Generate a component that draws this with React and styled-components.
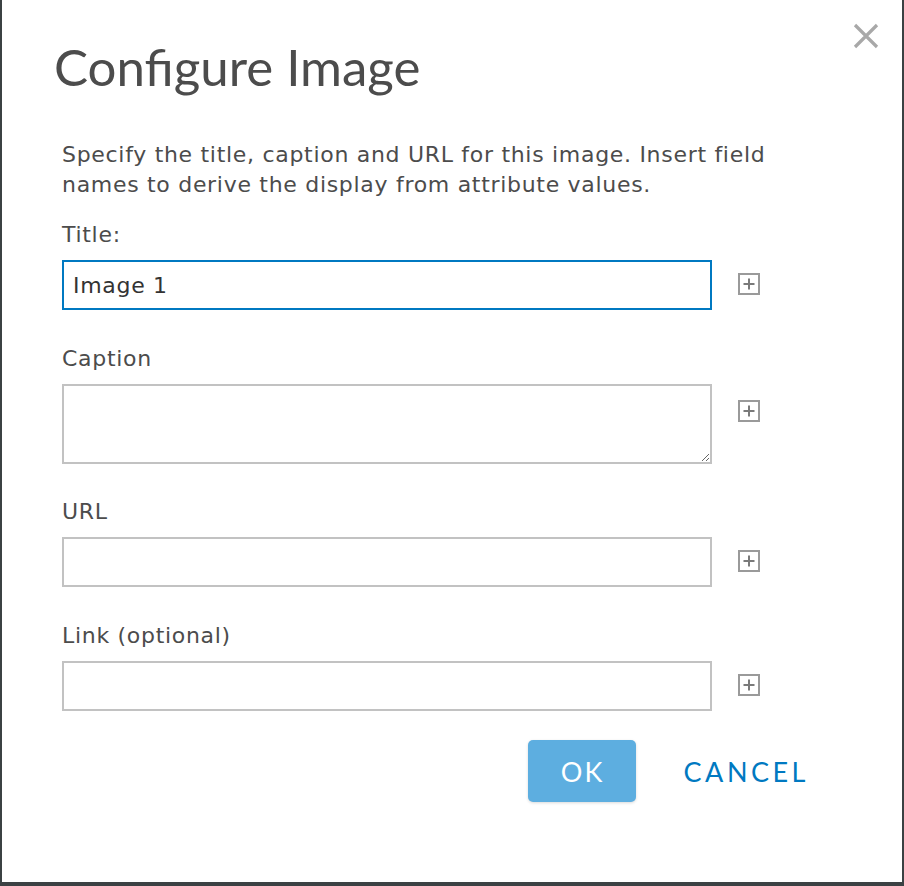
import React from 'react'
import styled, { createGlobalStyle } from 'styled-components'

const GlobalStyle = createGlobalStyle`
  html, body {
    margin: 0;
    padding: 0;
    background: #3b4143;
  }
  body {
    width: 904px;
    height: 886px;
    overflow: hidden;
  }
`

const Dialog = styled.div`
  position: relative;
  box-sizing: border-box;
  margin: 0 2px;
  height: 882px;
  background: #fff;
  padding: 0 93px 0 60px;
`

const Close = styled.button`
  position: absolute;
  top: 22px;
  right: 22px;
  width: 28px;
  height: 28px;
  padding: 0;
  border: 0;
  background: none;
  cursor: pointer;
`

const Title = styled.h1`
  margin: 0 0 0 -8px;
  padding-top: 38px;
  font-family: 'Lato', 'Open Sans', sans-serif;
  font-weight: 400;
  font-size: 51px;
  line-height: 58px;
  color: #4c4c4c;
`

const Intro = styled.p`
  margin: 44px 0 0;
  font-family: 'DejaVu Sans', Verdana, sans-serif;
  font-size: 22px;
  letter-spacing: 0.7px;
  line-height: 30px;
  color: #4c4c4c;
`

const Field = styled.div`
  margin-top: ${props => props.top || 34}px;
`

const Label = styled.label`
  display: block;
  font-family: 'DejaVu Sans', Verdana, sans-serif;
  font-size: 22px;
  letter-spacing: 0.7px;
  line-height: 30px;
  color: #4c4c4c;
  margin-bottom: ${props => props.gap || 10}px;
`

const Row = styled.div`
  display: flex;
  align-items: flex-start;
  gap: 26px;
`

const TextInput = styled.input`
  box-sizing: border-box;
  width: 650px;
  height: 50px;
  margin: 0;
  padding: 0 9px;
  border: 2px solid ${props => (props.focused ? '#0079c1' : '#c2c2c2')};
  border-radius: 0;
  outline: none;
  font-family: 'DejaVu Sans', Verdana, sans-serif;
  font-size: 22px;
  letter-spacing: 0.7px;
  color: #333;
  background: #fff;
`

const TextArea = styled.textarea`
  box-sizing: border-box;
  width: 650px;
  height: 80px;
  margin: 0;
  padding: 8px 9px;
  border: 2px solid #c2c2c2;
  border-radius: 0;
  outline: none;
  font-family: 'DejaVu Sans', Verdana, sans-serif;
  font-size: 22px;
  color: #333;
  resize: vertical;
  display: block;
`

const AddButton = styled.button`
  flex: none;
  width: 22px;
  height: 22px;
  margin-top: ${props => props.offset || 13}px;
  padding: 0;
  border: 0;
  background: none;
  cursor: pointer;
  display: block;
`

const Actions = styled.div`
  display: flex;
  justify-content: flex-end;
  align-items: center;
  gap: 48px;
  margin-top: 29px;
`

const Ok = styled.button`
  width: 108px;
  height: 62px;
  padding: 0 0 0 2px;
  border: 0;
  border-radius: 5px;
  background: #5daee0;
  box-shadow: 0 1px 3px rgba(0, 0, 0, 0.15);
  color: #fff;
  font-family: 'Lato', 'Open Sans', sans-serif;
  font-size: 27px;
  letter-spacing: 2px;
  cursor: pointer;
`

const Cancel = styled.button`
  padding: 0;
  border: 0;
  background: none;
  color: #0079c1;
  font-family: 'Lato', 'Open Sans', sans-serif;
  font-size: 27px;
  letter-spacing: 3.5px;
  cursor: pointer;
`

const PlusIcon = () => (
  <svg width="22" height="22" viewBox="0 0 22 22">
    <rect x="1" y="1" width="20" height="20" fill="none" stroke="#9a9a9a" strokeWidth="2" />
    <path d="M11 5.5v11M5.5 11h11" stroke="#7a7a7a" strokeWidth="2" />
  </svg>
)

const CloseIcon = () => (
  <svg width="28" height="28" viewBox="0 0 28 28">
    <path d="M3 3l22 22M25 3L3 25" stroke="#a8a8a8" strokeWidth="3.2" />
  </svg>
)

const fields = [
  { label: 'Caption', area: true, gap: 10, offset: 16 },
  { label: 'URL', top: 33 },
  { label: 'Link (optional)' },
]

export default function App() {
  return (
    <>
      <GlobalStyle />
      <Dialog>
        <Close aria-label="Close"><CloseIcon /></Close>
        <Title>Configure Image</Title>
        <Intro>
          Specify the title, caption and URL for this image. Insert field names to derive the display from attribute values.
        </Intro>
        <Field top={20}>
          <Label>Title:</Label>
          <Row>
            <TextInput focused defaultValue="Image 1" />
            <AddButton><PlusIcon /></AddButton>
          </Row>
        </Field>
        {fields.map(f => (
          <Field key={f.label} top={f.top}>
            <Label gap={f.gap}>{f.label}</Label>
            <Row>
              {f.area ? <TextArea /> : <TextInput />}
              <AddButton offset={f.offset}><PlusIcon /></AddButton>
            </Row>
          </Field>
        ))}
        <Actions>
          <Ok>OK</Ok>
          <Cancel>CANCEL</Cancel>
        </Actions>
      </Dialog>
    </>
  )
}
